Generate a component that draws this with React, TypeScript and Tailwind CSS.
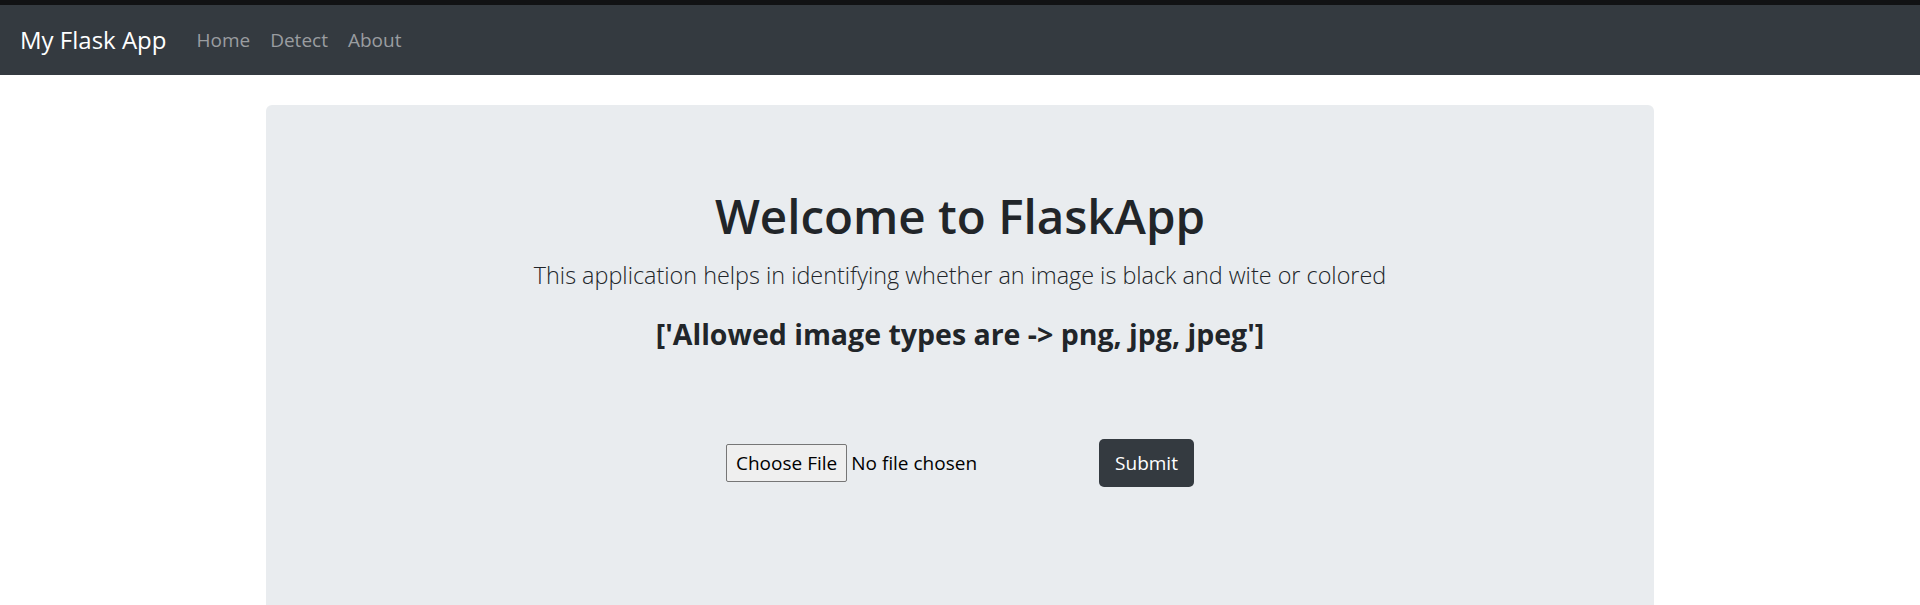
export default function App() {
  return (
    <div className="min-h-screen bg-white font-['Open_Sans',sans-serif] text-[#212529]">
      {/* top strip + navbar */}
      <div className="h-[5px] bg-[#111214]" />
      <nav className="flex h-[70px] items-center bg-[#343a40] px-5">
        <a href="#" className="mr-5 text-[24px] text-white">
          My Flask App
        </a>
        <ul className="flex text-[19px] text-[#9a9da0]">
          <li>
            <a href="#" className="px-[10px]">
              Home
            </a>
          </li>
          <li>
            <a href="#" className="px-[10px]">
              Detect
            </a>
          </li>
          <li>
            <a href="#" className="px-[10px]">
              About
            </a>
          </li>
        </ul>
      </nav>

      <main className="mx-auto mt-[30px] w-[1388px]">
        <div className="h-[600px] rounded-[6px] bg-[#e9ecef] px-10 pt-[81px] text-center">
          <h1 className="text-[47.5px] font-semibold leading-[60px] text-[#212529]">
            Welcome to FlaskApp
          </h1>
          <p className="mt-[12px] text-[23.4px] font-light text-[#212529]">
            This application helps in identifying whether an image is black and wite or colored
          </p>
          <h4 className="mt-[20px] text-[28.5px] font-bold">
            ['Allowed image types are -&gt; png, jpg, jpeg']
          </h4>

          <form className="mt-[83px] flex items-center justify-center">
            <div className="flex w-[373px] items-center">
              <button
                type="button"
                className="h-[38px] rounded-[2px] border border-[#767676] bg-[#efefef] px-[9px] text-[19px] text-black"
              >
                Choose File
              </button>
              <span className="ml-[4px] text-[19px] text-black">No file chosen</span>
            </div>
            <button
              type="submit"
              className="h-[48px] w-[95px] rounded-[5px] bg-[#343a40] text-[19px] text-white"
            >
              Submit
            </button>
          </form>
        </div>
      </main>
    </div>
  );
}
